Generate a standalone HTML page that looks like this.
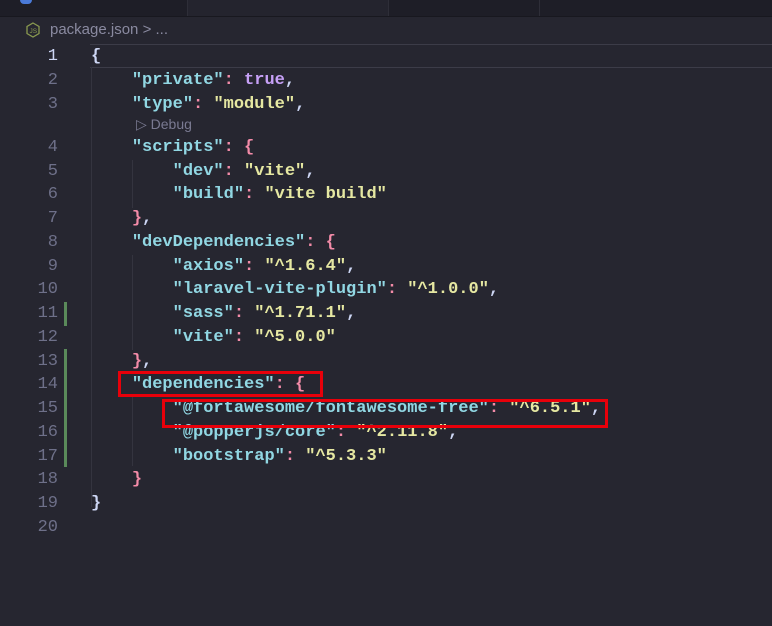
<!DOCTYPE html>
<html><head><style>
body{margin:0;width:772px;height:626px;background:#262630;overflow:hidden;position:relative;font-family:"Liberation Mono",monospace;}
.tabs{position:absolute;left:0;top:0;width:772px;height:16px;background:#1e1e27;border-bottom:1px solid #18181f}
.tab{position:absolute;top:0;height:16px;border-right:1px solid #2e2e38}
.bc{position:absolute;left:0;top:17px;height:27px;width:772px;font-family:"Liberation Sans",sans-serif;font-size:15px;color:#8a8aa0}
.cur{position:absolute;left:90px;top:44px;width:682px;height:22px;border-top:1px solid #3c3c48;border-bottom:1px solid #3c3c48}
.ln{position:absolute;left:0;width:58px;text-align:right;font-size:17px;color:#6e7089;line-height:24px;margin-top:2px}
.l{position:absolute;left:91px;font-size:17px;line-height:24px;white-space:pre;color:#cdd6f4;font-weight:bold;margin-top:2px}
.k{color:#91d7e3}.s{color:#e6e8a2}.p{color:#f38ba8}.t{color:#c6a0f6}.w{color:#cdd6f4}
.g{position:absolute;left:64px;width:3px;background:#5a8a5a}
.box{position:absolute;border:3px solid #e8000a;box-sizing:border-box}
.guide{position:absolute;width:1px;background:#34343f}
</style></head><body>
<div class="tabs">
<div class="tab" style="left:0;width:187px"></div>
<div class="tab" style="left:188px;width:200px;background:#24242e"></div>
<div class="tab" style="left:389px;width:150px"></div>
<div style="position:absolute;left:20px;top:0;width:12px;height:4px;background:#4a7ad8;border-radius:0 0 6px 6px"></div>
</div>
<div class="bc">
<svg style="position:absolute;left:25px;top:5px" width="16" height="16" viewBox="0 0 16 16"><polygon points="8,1 14,4.5 14,11.5 8,15 2,11.5 2,4.5" fill="none" stroke="#8a9a50" stroke-width="1.3"/><text x="4.5" y="11" font-size="6.5" fill="#8a9a50" font-family="Liberation Sans">JS</text></svg>
<span style="position:absolute;left:50px;top:4px">package.json &gt; ...</span>
</div>
<div class="cur"></div>
<div class="g" style="top:302px;height:24px"></div>
<div class="g" style="top:349px;height:118px"></div>
<div class="guide" style="left:91px;top:67px;height:440px"></div>
<div class="guide" style="left:132px;top:160px;height:48px"></div>
<div class="guide" style="left:132px;top:255px;height:95px"></div>
<div class="guide" style="left:132px;top:396px;height:70px"></div>

<div class="ln" style="top:43px;color:#cdd6f4">1</div>
<div class="ln" style="top:67px">2</div>
<div class="ln" style="top:91px">3</div>
<div class="ln" style="top:134px">4</div>
<div class="ln" style="top:158px">5</div>
<div class="ln" style="top:181px">6</div>
<div class="ln" style="top:205px">7</div>
<div class="ln" style="top:229px">8</div>
<div class="ln" style="top:253px">9</div>
<div class="ln" style="top:276px">10</div>
<div class="ln" style="top:300px">11</div>
<div class="ln" style="top:324px">12</div>
<div class="ln" style="top:348px">13</div>
<div class="ln" style="top:371px">14</div>
<div class="ln" style="top:395px">15</div>
<div class="ln" style="top:419px">16</div>
<div class="ln" style="top:443px">17</div>
<div class="ln" style="top:466px">18</div>
<div class="ln" style="top:490px">19</div>
<div class="ln" style="top:514px">20</div>

<div class="l" style="top:43px"><span class="w">{</span></div>
<div class="l" style="top:67px">    <span class="k">"private"</span><span class="p">:</span> <span class="t">true</span>,</div>
<div class="l" style="top:91px">    <span class="k">"type"</span><span class="p">:</span> <span class="s">"module"</span>,</div>
<div style="position:absolute;left:136px;top:116px;font-family:'Liberation Sans',sans-serif;font-size:14px;color:#7a7a92">▷ Debug</div>
<div class="l" style="top:134px">    <span class="k">"scripts"</span><span class="p">: {</span></div>
<div class="l" style="top:158px">        <span class="k">"dev"</span><span class="p">:</span> <span class="s">"vite"</span>,</div>
<div class="l" style="top:181px">        <span class="k">"build"</span><span class="p">:</span> <span class="s">"vite build"</span></div>
<div class="l" style="top:205px">    <span class="p">}</span>,</div>
<div class="l" style="top:229px">    <span class="k">"devDependencies"</span><span class="p">: {</span></div>
<div class="l" style="top:253px">        <span class="k">"axios"</span><span class="p">:</span> <span class="s">"^1.6.4"</span>,</div>
<div class="l" style="top:276px">        <span class="k">"laravel-vite-plugin"</span><span class="p">:</span> <span class="s">"^1.0.0"</span>,</div>
<div class="l" style="top:300px">        <span class="k">"sass"</span><span class="p">:</span> <span class="s">"^1.71.1"</span>,</div>
<div class="l" style="top:324px">        <span class="k">"vite"</span><span class="p">:</span> <span class="s">"^5.0.0"</span></div>
<div class="l" style="top:348px">    <span class="p">}</span>,</div>
<div class="l" style="top:371px">    <span class="k">"dependencies"</span><span class="p">: {</span></div>
<div class="l" style="top:395px">        <span class="k">"@fortawesome/fontawesome-free"</span><span class="p">:</span> <span class="s">"^6.5.1"</span>,</div>
<div class="l" style="top:419px">        <span class="k">"@popperjs/core"</span><span class="p">:</span> <span class="s">"^2.11.8"</span>,</div>
<div class="l" style="top:443px">        <span class="k">"bootstrap"</span><span class="p">:</span> <span class="s">"^5.3.3"</span></div>
<div class="l" style="top:466px">    <span class="p">}</span></div>
<div class="l" style="top:490px"><span class="w">}</span></div>

<div class="box" style="left:118px;top:371px;width:205px;height:26px"></div>
<div class="box" style="left:162px;top:399px;width:446px;height:29px"></div>
</body></html>
